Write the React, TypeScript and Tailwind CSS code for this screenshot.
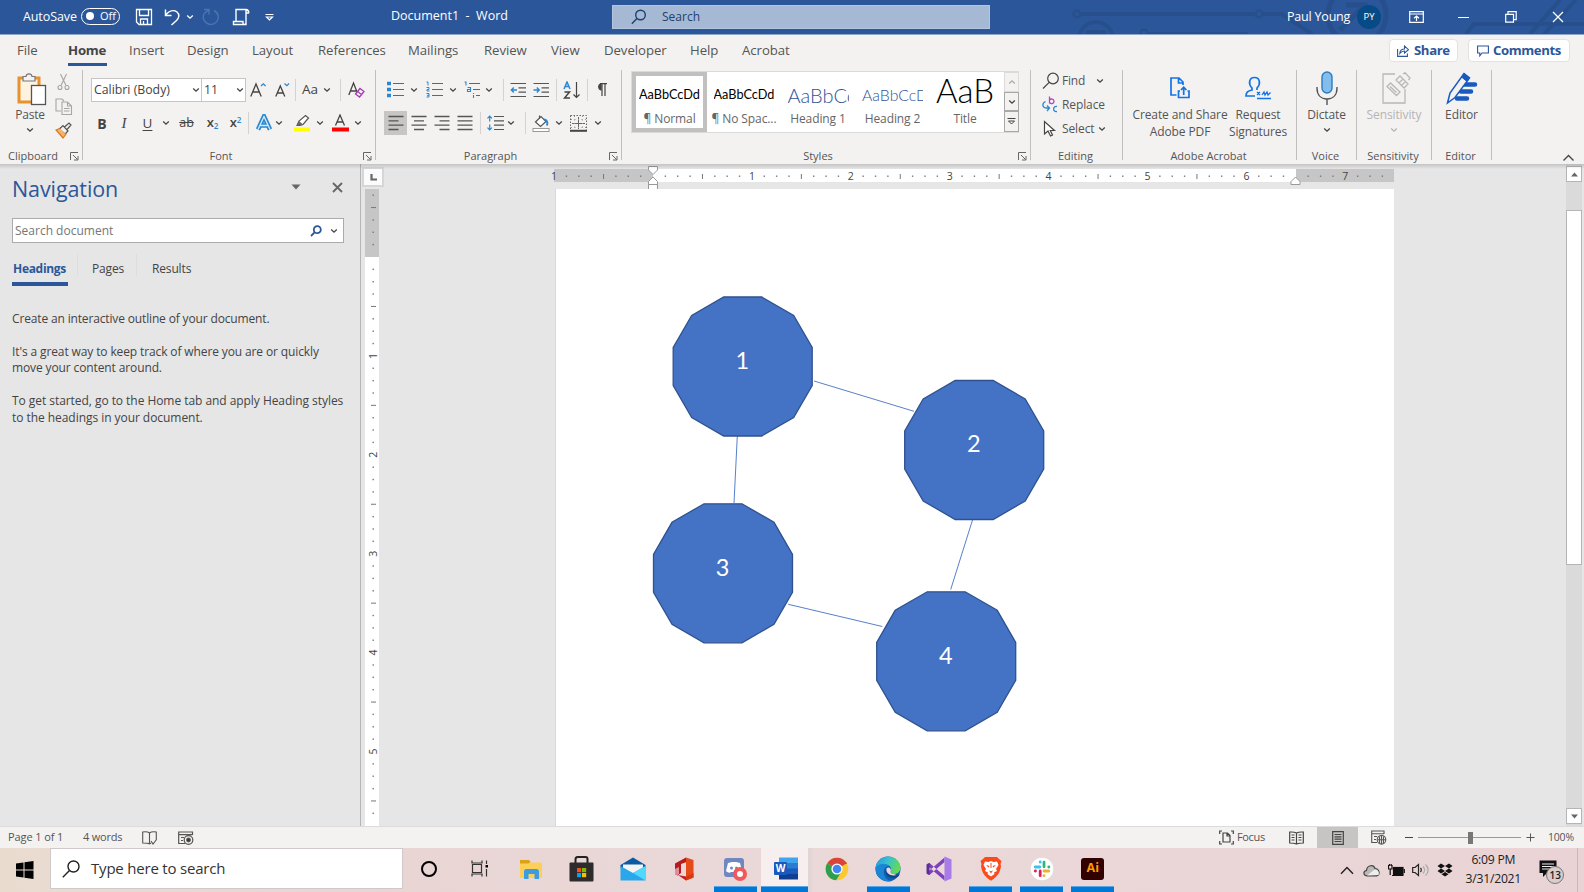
import React from "react";

type IcProps = { w: number; h: number; className?: string; s?: string; sw?: number; children: React.ReactNode };

function Ic({ w, h, className = "", s = "#444", sw = 1.2, children }: IcProps) {
  return (
    <svg width={w} height={h} viewBox={`0 0 ${w} ${h}`} fill="none" stroke={s} strokeWidth={sw} className={`block shrink-0 ${className}`}>
      {children}
    </svg>
  );
}

function Chev({ className = "", s = "#444" }: { className?: string; s?: string }) {
  return (
    <Ic w={8} h={8} s={s} sw={1.3} className={className}>
      <path d="M1.2 2.6 L4 5.2 L6.8 2.6" />
    </Ic>
  );
}

function Sep() {
  return <div className="mt-1 h-[90px] w-px shrink-0 bg-[#c0bfbe]" />;
}

function MiniSep({ className = "" }: { className?: string }) {
  return <div className={`h-[22px] w-px shrink-0 bg-[#d4d3d2] ${className}`} />;
}

function Group({ label, launcher, className, children }: { label: string; launcher?: boolean; className: string; children: React.ReactNode }) {
  return (
    <div className={`flex h-[98px] shrink-0 flex-col ${className}`}>
      <div className="h-[82px]">{children}</div>
      <div className="flex h-4 items-center pr-[3px]">
        <div className={`flex-1 whitespace-nowrap text-center text-[11px] text-[#555] ${launcher ? "pr-1" : "pl-px"}`}>{label}</div>
        {launcher && (
          <Ic w={9} h={9} s="#666" sw={1}>
            <path d="M0.5 8 V0.5 H8 M3 3 L7.5 7.5 M8 4 V8 H4" />
          </Ic>
        )}
      </div>
    </div>
  );
}

function TitleBar() {
  return (
    <header className="relative flex h-[35px] shrink-0 items-center border-b border-[#8fa6cb] bg-[#2b579a] text-[12.5px] text-white">
      <svg className="absolute left-[1060px] top-0" width="524" height="34" viewBox="0 0 524 34" fill="none" stroke="#274f8c" strokeWidth="4">
        <circle cx="17" cy="14" r="3.5" strokeWidth="2.5" />
        <path d="M21 14 H194 M203 14 H222 L252 34" />
        <circle cx="199" cy="14" r="3.5" strokeWidth="2.5" />
        <circle cx="36" cy="39" r="17" />
        <path d="M26 32 H46" />
        <circle cx="84" cy="33" r="3.5" strokeWidth="2.5" />
        <path d="M88 34 H188" />
        <circle cx="297" cy="15" r="29" strokeWidth="5" />
        <path d="M280 30 L304 6 M286 5 H305 V24" strokeWidth="5" />
        <path d="M406 34 L414 24 H524 M470 34 L500 0 M484 34 L516 0" />
      </svg>
      <div className="ml-[23px] w-[58px] whitespace-nowrap text-[12.5px] tracking-[-0.1px]">AutoSave</div>
      <div className="-mt-0.5 flex h-[17px] w-[39px] items-center rounded-full border border-white pl-1 text-[11px]">
        <div className="mr-[6px] h-2 w-2 rounded-full bg-white" />
        Off
      </div>
      <Ic w={18} h={18} s="#fff" sw={1.3} className="ml-[15px]">
        <path d="M1.5 1.5 H16.5 V16.5 H4 L1.5 14 Z M4.5 1.5 V7.5 H13.5 V1.5 M5.5 16 V11 H12.5 V16 M8.5 16 V13" />
      </Ic>
      <Ic w={17} h={18} s="#fff" sw={1.5} className="ml-[11px]">
        <path d="M1.5 1.5 V7.5 H7.5 M1.8 7 C5 3 9.5 1.5 13 4 C16 6.5 15 10 12.5 12.5 L7.5 17" />
      </Ic>
      <Chev s="#fff" className="ml-[5px]" />
      <Ic w={18} h={18} s="#4a74b0" sw={1.4} className="ml-[8px]">
        <path d="M2 1.5 H7 V6.5 M7 2 C2 4 0 8 2 12 C4 16.5 10 18 14 14.5 C18 10.5 16.500 4.500 12 2.500" />
      </Ic>
      <Ic w={18} h={18} s="#fff" sw={1.4} className="ml-[12px]">
        <path d="M4 13 V1.500 H14 V16.500 H1.500 V13.500 H11 V15 C11 17 14 17 14 15 M14 1.500 C17 1.500 17 5 16.500 5 H14" />
      </Ic>
      <Ic w={9} h={9} s="#fff" sw={1.2} className="ml-[15px]">
        <path d="M0.5 1.500 H8.500 M1.500 4 H7.500 L4.500 7 Z" />
      </Ic>
      <div className="-mt-0.5 ml-[117px] w-[221px] whitespace-pre text-[12.5px]">Document1  -  Word</div>
      <div className="flex h-6 w-[378px] items-center border border-[#b4c5df] bg-[#a6b9d4] text-[#1f3f70]">
        <Ic w={16} h={16} s="#1f3f70" sw={1.4} className="ml-[18px]">
          <circle cx="9.500" cy="6" r="4.800" />
          <path d="M6 9.500 L0.800 14.800" />
        </Ic>
        <div className="ml-[15px] text-[12px]">Search</div>
      </div>
      <div className="relative ml-[297px] w-[70px] whitespace-nowrap text-[12.5px] tracking-[-0.2px]">Paul Young</div>
      <div className="relative flex h-6 w-6 items-center justify-center rounded-full bg-[#064b86] text-[9.5px]">PY</div>
      <Ic w={15} h={12} s="#fff" sw={1.200} className="relative ml-[28px]">
        <path d="M0.700 0.700 H14.300 V11.300 H0.700 Z M0.700 3 H14.300 M7.500 10 V5.200 M5 7.300 L7.500 5 L10 7.300" />
      </Ic>
      <div className="relative ml-[34px] h-px w-[11px] bg-white" />
      <Ic w={12} h={12} s="#fff" sw={1.200} className="relative ml-[36px]">
        <path d="M0.700 3.300 H8.500 V11.200 H0.700 Z M3 3 V0.700 H11.200 V8.700 H8.500" />
      </Ic>
      <Ic w={12} h={12} s="#fff" sw={1.300} className="relative ml-[35px]">
        <path d="M1 1 L11 11 M11 1 L1 11" />
      </Ic>
    </header>
  );
}

function TabBar() {
  return (
    <nav className="flex h-[31px] shrink-0 items-center whitespace-nowrap pl-[17px] text-[13.2px] tracking-[-0.05px] text-[#555]">
      <div className="w-[51px]">File</div>
      <div className="w-[61px]">
        <div className="mt-1 flex h-[27px] w-[39px] items-center border-b-[3px] border-[#2b579a] pb-px font-bold tracking-[-0.200px] text-[#444]">Home</div>
      </div>
      <div className="w-[58px]">Insert</div>
      <div className="w-[65px]">Design</div>
      <div className="w-[66px]">Layout</div>
      <div className="w-[90px]">References</div>
      <div className="w-[76px]">Mailings</div>
      <div className="w-[67px]">Review</div>
      <div className="w-[53px]">View</div>
      <div className="w-[86px]">Developer</div>
      <div className="w-[52px]">Help</div>
      <div className="w-[647px]">Acrobat</div>
      <div className="flex h-[23px] w-[69px] items-center rounded-sm border border-[#e3e2e1] bg-white pl-[7px] font-bold text-[#2b579a]">
        <Ic w={12} h={12} s="#2b579a" sw={1.100} className="mr-[5px]">
          <path d="M0.600 4 V11.400 H10.400 V8.500 M2.800 8.500 C3 5.500 5 4 7.500 4 V1 L11.500 4.700 L7.500 8 V6 C5 6 4 7 2.800 8.500 Z" />
        </Ic>
        <span className="tracking-[-0.400px]">Share</span>
      </div>
      <div className="ml-[10px] flex h-[23px] w-[102px] items-center rounded-sm border border-[#e3e2e1] bg-white pl-[8px] font-bold text-[#2b579a]">
        <Ic w={12} h={12} s="#2b579a" sw={1.100} className="mr-[4px]">
          <path d="M0.600 1 H11.400 V8 H5 L2.800 10.800 V8 H0.600 Z" />
        </Ic>
        <span className="tracking-[-0.400px]">Comments</span>
      </div>
    </nav>
  );
}

function Clipboard() {
  return (
    <Group label="Clipboard" launcher className="w-[82px]">
      <div className="flex">
        <div className="flex w-[50px] flex-col items-center pl-[10px] pt-[7px]">
          <Ic w={30} h={33} className="ml-1">
            <rect x="2" y="5" width="20" height="24" stroke="#e8912d" strokeWidth="3" fill="#fdf3e0" />
            <path d="M6 3.500 H9 C9.500 0 14.500 0 15 3.500 H18 V8 H6 Z" fill="#f3f2f1" stroke="#777" />
            <rect x="14.500" y="12.500" width="14" height="19" fill="#fff" stroke="#555" strokeWidth="1.300" />
          </Ic>
          <div className="mt-px text-[12px] leading-4 tracking-[-0.200px] text-[#555]">Paste</div>
          <Chev className="mt-[3px]" />
        </div>
        <div className="flex flex-col pl-[5px] pt-[7px]">
          <Ic w={17} h={18} s="#a6a6a6" sw={1.100}>
            <path d="M5.500 1 L11 12.500 M11.500 1 L6 12.500" />
            <circle cx="5" cy="14.500" r="2" />
            <circle cx="12" cy="14.500" r="2" />
          </Ic>
          <Ic w={18} h={18} s="#a6a6a6" sw={1.100} className="mt-[7px]">
            <path d="M6 13 H1 V1 H7 L9 3 M7 4 H12.500 L16.500 8 V16.500 H7 Z M12.500 4 V8 H16.500 M9 10.500 H14.500 M9 13 H14.500" />
          </Ic>
          <Ic w={17} h={17} s="#555" sw={1.200} className="mt-[6px]">
            <path d="M1 8 L6 6 L11 12 L8 16 Z" fill="#f6b26b" stroke="#d97a1c" />
            <path d="M5 6.500 L8 3.500 L13 9 L10.500 11.500 M9.500 5 L14 1 L16 3 L12 7.500" fill="#f3f2f1" />
          </Ic>
        </div>
      </div>
    </Group>
  );
}

function FontGroup() {
  return (
    <Group label="Font" launcher className="w-[292px]">
      <div className="mt-3 flex h-[23px] items-center text-[#444]">
        <div className="ml-[8px] flex h-[24px] w-[111px] items-center justify-between border border-[#c6c6c6] bg-white pl-[2px] pr-px pt-px text-[12.3px]">
          Calibri (Body)
          <Chev />
        </div>
        <div className="-ml-px flex h-[24px] w-[45px] items-center justify-between border border-[#c6c6c6] bg-white pl-[2px] pr-px pt-px text-[12.3px]">
          11
          <Chev />
        </div>
        <Ic w={17} h={16} sw={1.300} className="ml-[4px]">
          <path d="M0.800 14.500 L6 2 L11.200 14.500 M2.600 10 H9.400" />
          <path d="M11 4 L13.300 1.800 L15.600 4" stroke="#2b88d0" />
        </Ic>
        <Ic w={15} h={16} sw={1.300} className="ml-[8px]">
          <path d="M0.800 14.500 L5.300 4 L9.800 14.500 M2.300 11 H8.300" />
          <path d="M9.500 1.500 L11.800 3.700 L14.100 1.500" stroke="#2b88d0" />
        </Ic>
        <MiniSep className="ml-[5px]" />
        <div className="ml-[6px] w-[21px] text-[13.500px]">Aa</div>
        <Chev />
        <MiniSep className="ml-[9px]" />
        <Ic w={18} h={18} sw={1.300} className="ml-[7px]">
          <path d="M0.800 14 L5.500 2 L9 11 M2.500 10 H8" />
          <path d="M7.500 13 L12 7.500 L16 10.500 L11.500 16 Z M9.500 10.500 L13.500 13.500" stroke="#a33bb0" />
        </Ic>
      </div>
      <div className="mt-[10px] flex h-6 items-center text-[#444]">
        <div className="ml-[9px] w-5 text-center text-[14px] font-bold">B</div>
        <div className="w-6 text-center font-['Liberation_Serif'] text-[15px] italic">I</div>
        <div className="w-[23px] text-center text-[13.500px] underline underline-offset-2">U</div>
        <div className="flex w-[14px] justify-center"><Chev /></div>
        <div className="w-[27px] text-center text-[12.500px] line-through">ab</div>
        <div className="w-[25px] text-center text-[13px] font-semibold">x<sub className="text-[8px] text-[#2b88d0]">2</sub></div>
        <div className="w-[21px] text-center text-[13px] font-semibold">x<sup className="text-[8px] text-[#2b88d0]">2</sup></div>
        <MiniSep className="ml-[2px]" />
        <Ic w={18} h={18} className="ml-[6px]">
          <path d="M3 15.500 L9 2.500 L15 15.500 M5.500 11.500 H12.500" stroke="#2b88d0" strokeWidth="4.600" />
          <path d="M3 15.500 L9 2.500 L15 15.500 M5.500 11.500 H12.500" stroke="#d6eaf9" strokeWidth="1.300" />
        </Ic>
        <Chev className="ml-[2px]" />
        <Ic w={18} h={18} className="ml-[10px]">
          <path d="M4 11.500 L6 7 L12.500 1.500 L15.500 4 L10 10.500 L7 11.500 Z" fill="#fff" stroke="#555" />
          <path d="M4 11.500 L6 7 L10 10.500 L7 11.500 Z" fill="#666" stroke="none" />
          <rect x="1" y="13.500" width="16" height="4" fill="#ff0" stroke="none" />
        </Ic>
        <Chev className="ml-[5px]" />
        <Ic w={18} h={18} sw={1.300} className="ml-[7px]">
          <path d="M4.500 11.500 L9 1 L13.500 11.500 M6 8 H12" />
          <rect x="1" y="13.500" width="17" height="4" fill="#f00" stroke="none" />
        </Ic>
        <Chev className="ml-[5px]" />
      </div>
    </Group>
  );
}

function Lines({ d, className = "" }: { d: string; className?: string }) {
  return (
    <Ic w={16} h={16} s="#555" sw={1.300} className={className}>
      <path d={d} />
    </Ic>
  );
}

function ParagraphGroup() {
  return (
    <Group label="Paragraph" launcher className="w-[245px]">
      <div className="mt-3 flex h-[23px] items-center">
        <Ic w={17} h={17} s="#666" className="ml-[11px]">
          <path d="M6 2.500 H17 M6 8.500 H17 M6 14.500 H17" />
          <path d="M0 2.500 H4 M0 8.500 H4 M0 14.500 H4" stroke="#2b88d0" strokeWidth="3.500" />
        </Ic>
        <Chev className="ml-[6px]" />
        <Ic w={17} h={17} s="#666" className="ml-[8px]">
          <path d="M6 2.500 H17 M6 8.500 H17 M6 14.500 H17" />
          <path d="M0.500 1 H2 V4.500 M0.500 6.500 H3 V8.500 H1 V10 H3.500 M0.500 12.500 H3 V16 H0.500 M1 14.300 H3" stroke="#2b88d0" strokeWidth="1" />
        </Ic>
        <Chev className="ml-[6px]" />
        <Ic w={17} h={17} s="#666" className="ml-[7px]">
          <path d="M5 2.500 H16 M9 8.500 H16 M12 14.500 H16" />
          <path d="M0.500 1 H2 V4.500 M3.500 6.500 H6.500 V10.500 H3.500 V8.500 H6.500 M9.500 12 V13 M9.500 14 V17" stroke="#2b88d0" strokeWidth="1.100" />
        </Ic>
        <Chev className="ml-[4px]" />
        <MiniSep className="ml-[10px]" />
        <Ic w={17} h={16} s="#555" className="ml-[6px]">
          <path d="M0.500 1.500 H16 M8.500 5.800 H16 M8.500 10.200 H16 M0.500 14.500 H16" />
          <path d="M7 8 H1.500 M3.800 5.500 L1.300 8 L3.800 10.500" stroke="#2b88d0" strokeWidth="1.400" />
        </Ic>
        <Ic w={17} h={16} s="#555" className="ml-[6px]">
          <path d="M0.500 1.500 H16 M8.500 5.800 H16 M8.500 10.200 H16 M0.500 14.500 H16" />
          <path d="M0.500 8 H6 M3.800 5.500 L6.300 8 L3.800 10.500" stroke="#2b88d0" strokeWidth="1.400" />
        </Ic>
        <MiniSep className="ml-[6px]" />
        <Ic w={18} h={18} s="#444" className="ml-[6px]">
          <path d="M1 8 L4 1 L7 8 M2.200 5.500 H5.800" stroke="#2b88d0" strokeWidth="1.500" />
          <path d="M1.500 11 H6.500 L1.500 17 H7" strokeWidth="1.500" />
          <path d="M13.500 1 V16.500 M10.500 13.500 L13.500 16.500 L16.500 13.500" />
        </Ic>
        <MiniSep className="ml-[6px]" />
        <Ic w={12} h={14} s="#444" className="ml-[8px]">
          <path d="M5 0.700 A3.300 3.300 0 0 0 5 7 Z" fill="#444" />
          <path d="M4 0.700 H11 M6 1 V13 M9 1 V13" />
        </Ic>
      </div>
      <div className="mt-[10px] flex h-6 items-center">
        <div className="ml-2 flex h-6 w-[23px] items-center justify-center bg-[#c8c6c4]">
          <Lines d="M0.500 1.500 H15.500 M0.500 5.800 H10.500 M0.500 10.200 H15.500 M0.500 14.500 H10.500" />
        </div>
        <Lines className="ml-[4px]" d="M0.500 1.500 H15.500 M3 5.800 H13 M0.500 10.200 H15.500 M3 14.500 H13" />
        <Lines className="ml-[7px]" d="M0.500 1.500 H15.500 M5.500 5.800 H15.500 M0.500 10.200 H15.500 M5.500 14.500 H15.500" />
        <Lines className="ml-[7px]" d="M0.500 1.500 H15.500 M0.500 5.800 H15.500 M0.500 10.200 H15.500 M0.500 14.500 H15.500" />
        <MiniSep className="ml-[7px]" />
        <Ic w={18} h={16} s="#555" className="ml-[6px]">
          <path d="M7 1.500 H17 M7 5.800 H17 M7 10.200 H17 M7 14.500 H17" />
          <path d="M2.700 1 V6.500 M2.700 9.500 V15 M0.500 3.300 L2.700 1 L4.900 3.300 M0.500 12.700 L2.700 15 L4.900 12.700" stroke="#2b88d0" />
        </Ic>
        <Chev className="ml-[2px]" />
        <MiniSep className="ml-[10px]" />
        <Ic w={18} h={17} s="#555" className="ml-[6px]">
          <path d="M3.500 7 L9 1.500 L14 6.500 L8.500 11.500 Z M7.500 4 V0.500" fill="#fff" />
          <path d="M12 4.500 C15 5 16 7 15 10.500" stroke="#2b88d0" strokeWidth="2" />
          <rect x="1" y="13.500" width="16" height="3" fill="#fff" stroke="#999" strokeWidth="1" />
        </Ic>
        <Chev className="ml-[5px]" />
        <Ic w={17} h={17} s="#666" sw={1} className="ml-[7px]">
          <path d="M0.500 0.500 H16.500 V15 M0.500 0.500 V15" strokeDasharray="1.500 1.500" />
          <path d="M8.500 2 V14 M2 8.500 H15" />
          <path d="M4.500 1 V14 M12.500 1 V14 M1 4.500 H16 M1 12.500 H16" strokeDasharray="1 2.500" stroke="#999" />
          <path d="M0 15.800 H17" strokeWidth="2" stroke="#444" />
        </Ic>
        <Chev className="ml-[7px]" />
      </div>
    </Group>
  );
}

function StyleCell({ sample, name, sampleClass, className }: { sample: string; name: string; sampleClass: string; className: string }) {
  return (
    <div className={`flex flex-col items-center overflow-hidden ${className}`}>
      <div className={`flex shrink-0 items-center overflow-hidden whitespace-nowrap font-['Lato'] ${sampleClass}`}>{sample}</div>
      <div className="h-4 whitespace-nowrap text-[12px] leading-4 tracking-[-0.100px] text-[#666]">{name}</div>
    </div>
  );
}

function StylesGroup() {
  return (
    <Group label="Styles" launcher className="w-[408px]">
      <div className="ml-[9px] mt-[5px] flex h-[62px] w-[388px] border border-[#dcdbda] bg-white">
        <StyleCell sample="AaBbCcDd" name="¶ Normal" sampleClass="h-[35px] pt-[3px] text-[12.700px] text-black" className="h-[60px] w-[75px] border-4 border-[#c1c0bf]" />
        <StyleCell sample="AaBbCcDd" name="¶ No Spac..." sampleClass="h-[35px] pt-[3px] text-[12.700px] text-black" className="w-[74px] pt-1" />
        <StyleCell sample="AaBbCcDd" name="Heading 1" sampleClass="h-[35px] pt-[2px] w-[61px] text-[20px] font-light text-[#2f5496]" className="w-[74px] pt-1" />
        <StyleCell sample="AaBbCcDd" name="Heading 2" sampleClass="h-[35px] pt-[2px] w-[61px] text-[15.800px] font-light text-[#2f5496]" className="w-[75px] pt-1" />
        <StyleCell sample="AaB" name="Title" sampleClass="mt-[3px] h-[32px] pb-[9px] text-[33px] leading-none font-light text-black" className="w-[70px] pt-1" />
        <div className="-mr-px ml-1 flex flex-1 flex-col bg-[#f3f2f1]">
          <div className="flex h-5 items-center justify-center border border-[#dcdbda]"><Chev s="#aaa" className="rotate-180" /></div>
          <div className="flex h-5 items-center justify-center border border-[#a9a8a7]"><Chev /></div>
          <div className="flex h-[21px] items-center justify-center border border-[#a9a8a7]">
            <Ic w={9} h={9} s="#444" sw={1}><path d="M0.500 1.500 H8.500 M1.500 4 H7.500 L4.500 7 Z" /></Ic>
          </div>
        </div>
      </div>
    </Group>
  );
}

function EditingGroup() {
  return (
    <Group label="Editing" className="w-[91px]">
      <div className="flex flex-col pl-[11px] pt-[3px] text-[12px] text-[#555]">
        <div className="flex h-6 items-center">
          <Ic w={18} h={18} s="#444" className="-mt-px mr-[2px]">
            <circle cx="11" cy="6.500" r="5.300" />
            <path d="M7.200 10.300 L1 16.500" />
          </Ic>
          <div className="w-[34px] tracking-[-0.200px]">Find</div>
          <Chev />
        </div>
        <div className="flex h-6 items-center">
          <div className="flex w-5 items-center">
            <Ic w={17} h={18} s="#2b88d0" sw={1.300}>
              <path d="M3.500 5.500 C0 7 0 11 3.500 12 H7 M5 9.500 L7.500 12 L5 15" />
              <path d="M15 10.500 C10.500 9.500 10.500 16.500 15 15.500" />
              <path d="M7.500 0.500 V7.500 M7.500 4 C9 2.200 12 3 12 5.300 C12 7.800 9 8.500 7.500 6.500" stroke="#b146c2" />
            </Ic>
          </div>
          <div className="tracking-[-0.100px]">Replace</div>
        </div>
        <div className="flex h-6 items-center">
          <Ic w={17} h={18} s="#444" className="mr-[3px]">
            <path d="M2.500 1.500 V14 L6 11 L8.500 16 L10.500 15 L8.300 10.500 H12.500 Z" fill="#fff" />
          </Ic>
          <div className="w-[36px] tracking-[-0.100px]">Select</div>
          <Chev />
        </div>
      </div>
    </Group>
  );
}

function BigButton({ icon, lines, className, chevron, muted }: { icon: React.ReactNode; lines: string[]; className: string; chevron?: boolean; muted?: boolean }) {
  return (
    <div className={`flex flex-col items-center ${className}`}>
      <div className="flex h-[41px] items-center justify-center pt-[3px]">{icon}</div>
      {lines.map((l) => (
        <div key={l} className={`whitespace-nowrap text-[12px] leading-[16.500px] tracking-[-0.100px] ${muted ? "text-[#b5b4b3]" : "text-[#555]"}`}>{l}</div>
      ))}
      {chevron && <Chev className="mt-[2px]" s={muted ? "#b5b4b3" : "#444"} />}
    </div>
  );
}

function RightGroups() {
  return (
    <>
      <Group label="Adobe Acrobat" className="w-[173px]">
        <div className="flex">
          <BigButton
            className="w-[114px]"
            lines={["Create and Share", "Adobe PDF"]}
            icon={
              <Ic w={20} h={22} s="#1473e6" sw={1.700}>
                <path d="M6.500 18 H1 V1 H9 L13 5 V8 M8.500 1 V6 H13 M10 14 H8.500 V20.500 H19 V14 H17.500 M13.700 18 V10.500 M11 13 L13.700 10.300 L16.400 13" />
              </Ic>
            }
          />
          <BigButton
            className="w-[42px]"
            lines={["Request", "Signatures"]}
            icon={
              <Ic w={26} h={24} s="#1473e6" sw={1.700}>
                <path d="M10 20 H1 C1 16 3 15 7 14 V12 C3 8 4 1.500 9.500 1.500 C15 1.500 16 8 12 12 V14 M12 22.500 H26" />
                <path d="M12 16 L15 19 M15 16 L12 19 M17 19 L19 16 L20 19 L22 16 L23 19 L25.500 16.500" strokeWidth="1.300" />
              </Ic>
            }
          />
        </div>
      </Group>
      <Sep />
      <Group label="Voice" className="w-[59px]">
        <BigButton
          className="w-[59px]"
          chevron
          lines={["Dictate"]}
          icon={
            <Ic w={22} h={34} s="#555" sw={1.400}>
              <path d="M1 16 V17 C1 24 5 28 11 28 C17 28 21 24 21 17 V16 M11 28 V34" />
              <rect x="6" y="1" width="10" height="21" rx="5" fill="#83bdeb" stroke="#2b7cc4" />
            </Ic>
          }
        />
      </Group>
      <Sep />
      <Group label="Sensitivity" className="w-[74px]">
        <BigButton
          className="w-[74px]"
          chevron
          muted
          lines={["Sensitivity"]}
          icon={
            <Ic w={30} h={32} s="#b8b7b6" sw={1.300} className="ml-[3px]">
              <path d="M14 2 H2 V31 H24 V17" />
              <path d="M6 14.500 L9.500 11 L19 20 L15.500 23.500 Z M9 14.500 L15.500 20.500 M15 8 L19 4 L27 12 L23 16 Z M18 11 L22 7 M20.500 13.500 L24.500 9.500 M22 2 L24 0.700 L29 6 L27.500 8" />
            </Ic>
          }
        />
      </Group>
      <Sep />
      <Group label="Editor" className="w-[59px]">
        <BigButton
          className="w-[59px]"
          lines={["Editor"]}
          icon={
            <Ic w={32} h={34} s="#185abd" sw={4.500}>
              <path d="M18 13.500 H29 M15 20.500 H25 M11 27.500 H21" strokeLinecap="round" />
              <path d="M1.500 32 L4 22 L18 2.500 L23.500 7 L9 26.500 Z" fill="#f3f2f1" strokeWidth="1.500" />
              <path d="M18 2.500 L23.500 7 L21 10.500 L15.500 6 Z" fill="#185abd" strokeWidth="1" />
            </Ic>
          }
        />
      </Group>
      <Sep />
      <div className="flex flex-1 items-end justify-end pb-[2px] pr-[9px]">
        <Ic w={13} h={9} s="#444" sw={1.400}><path d="M1.500 7.500 L6.500 2.500 L11.500 7.500" /></Ic>
      </div>
    </>
  );
}

function NavigationPane() {
  return (
    <aside className="flex w-[361px] shrink-0 flex-col border-r border-[#b5b5b5] pl-[12px] text-[#444]">
      <div className="mt-[8px] flex h-[34px] items-center">
        <div className="w-[279px] text-[21.500px] tracking-[-0.100px] text-[#2b579a]">Navigation</div>
        <Ic w={10} h={6} className="-mt-1"><path d="M0.500 0.500 H9.500 L5 5.500 Z" fill="#666" stroke="none" /></Ic>
        <Ic w={11} h={11} s="#666" sw={1.800} className="-mt-1 ml-[31px]"><path d="M1 1 L10 10 M10 1 L1 10" /></Ic>
      </div>
      <div className="mt-[12px] flex h-[25px] w-[332px] items-center border border-[#ababab] bg-white">
        <div className="w-[297px] pl-[2px] pt-px text-[12px] text-[#767676]">Search document</div>
        <Ic w={12} h={12} s="#2b579a" sw={1.800}><circle cx="7.300" cy="4.700" r="3.500" /><path d="M4.800 7.200 L1 11" /></Ic>
        <Chev className="ml-[8px]" />
      </div>
      <div className="mt-[11px] flex h-[32px] text-[12px]">
        <div className="flex w-[56px] items-center border-b-[4px] border-[#2b579a] pl-px pt-[2px] font-bold tracking-[-0.300px] text-[#2b579a]">Headings</div>
        <div className="ml-[9px] h-[22px] w-px bg-[#dedede]" />
        <div className="flex h-[28px] w-[58px] items-center pl-[14px] pt-[2px] tracking-[-0.150px]">Pages</div>
        <div className="h-[22px] w-px bg-[#dedede]" />
        <div className="flex h-[28px] items-center pl-[15px] pt-[2px] tracking-[-0.150px]">Results</div>
      </div>
      <div className="mt-[25px] whitespace-nowrap text-[12px] leading-[16.500px]">
        <p className="tracking-[-0.150px]">Create an interactive outline of your document.</p>
        <p className="mt-[16px] tracking-[-0.120px]">It's a great way to keep track of where you are or quickly<br />move your content around.</p>
        <p className="mt-[16.500px] tracking-[-0.050px]">To get started, go to the Home tab and apply Heading styles<br />to the headings in your document.</p>
      </div>
    </aside>
  );
}

const INCH = 98.9;

function HorizontalRuler() {
  const marks: React.ReactNode[] = [];
  for (let i = -7; i <= 59; i++) {
    const x = 99 + (i * INCH) / 8;
    if (i === 0 || i === 52) continue;
    if (i % 8 === 0) marks.push(<text key={i} x={x} y="11" textAnchor="middle" fontSize="10.500" fill="#444">{Math.abs(i / 8)}</text>);
    else if (i % 4 === 0) marks.push(<rect key={i} x={x - 0.500} y="5" width="1" height="5" fill="#777" />);
    else marks.push(<rect key={i} x={x - 0.700} y="6.500" width="1.400" height="1.400" fill="#777" />);
  }
  return (
    <svg width="840" height="22" viewBox="0 0 840 22" className="block overflow-visible font-['Open_Sans']">
      <rect y="0" width="840" height="13" fill="#fff" />
      <rect y="0" width="99" height="13" fill="#c6c6c6" />
      <rect x="742" y="0" width="98" height="13" fill="#c6c6c6" />
      <text x="0" y="11" textAnchor="middle" fontSize="10.500" fill="#444">1</text>
      {marks}
      <g fill="#fff" stroke="#999">
        <path d="M94.500 -2.500 H103.500 V1 L99 5.500 L94.500 1 Z" />
        <path d="M99 8 L103.500 12.500 V20.500 H94.500 V12.500 Z M94.500 15.500 H103.500" />
        <path d="M741.500 8 L746 12.500 V15.500 H737 V12.500 Z" />
      </g>
    </svg>
  );
}

function VerticalRuler() {
  const marks: React.ReactNode[] = [];
  for (let i = -5; i <= 45; i++) {
    const y = 68 + (i * INCH) / 8;
    if (i === 0) continue;
    if (i % 8 === 0) marks.push(<text key={i} x="0" y="0" transform={`translate(11.500 ${y}) rotate(-90)`} textAnchor="middle" fontSize="10.500" fill="#444">{i / 8}</text>);
    else if (i % 4 === 0) marks.push(<rect key={i} x="6" y={y - 0.500} width="5" height="1" fill="#777" />);
    else marks.push(<rect key={i} x="7.500" y={y - 0.700} width="1.400" height="1.400" fill="#777" />);
  }
  return (
    <svg width="14" height="637" viewBox="0 0 14 637" className="block font-['Open_Sans']">
      <rect width="14" height="637" fill="#fff" />
      <rect width="14" height="68" fill="#c6c6c6" />
      {marks}
    </svg>
  );
}

const nodes = [
  { n: "1", x: 187.700, y: 177.500 },
  { n: "2", x: 419.200, y: 261 },
  { n: "3", x: 168, y: 384.300 },
  { n: "4", x: 391.200, y: 472.300 },
];

const dodecagon = [
  [-19, -69.500], [19, -69.500], [51, -51], [69.500, -19], [69.500, 19], [51, 51],
  [19, 69.500], [-19, 69.500], [-51, 51], [-69.500, 19], [-69.500, -19], [-51, -51],
];

function Diagram() {
  return (
    <svg width="838" height="637" viewBox="1 0 838 637" className="block">
      <g stroke="#4472c4" strokeWidth="0.900">
        <path d="M259 192 L359 222.300 M182.300 247 L179 314 M417.500 331 L395.700 400.500 M233.300 415.300 L327.300 437.500" />
      </g>
      {nodes.map(({ n, x, y }) => (
        <g key={n}>
          <polygon points={dodecagon.map(([dx, dy]) => `${x + dx},${y + dy}`).join(" ")} fill="#4472c4" stroke="#2f528f" strokeWidth="1.300" />
          <text x={x - 0.500} y={y + 2.300} textAnchor="middle" fontSize="23.500" fill="#fff" className="font-['Lato']">{n}</text>
        </g>
      ))}
    </svg>
  );
}

function Editor() {
  return (
    <main className="flex h-[662px] shrink-0 bg-[#e6e6e6]">
      <NavigationPane />
      <div className="flex w-6 shrink-0 flex-col pl-px pt-[3px]">
        <div className="flex h-[20px] w-[22px] items-center justify-center border-2 border-[#d6d6d6] bg-[#fbfbfb]">
          <Ic w={7} h={7} s="#666" sw={2.200}><path d="M1.500 0 V5.500 H7" /></Ic>
        </div>
        <div className="ml-[3px] mt-[2px]"><VerticalRuler /></div>
      </div>
      <div className="ml-[169px] flex w-[840px] shrink-0 flex-col pt-[5px]">
        <HorizontalRuler />
        <div className="-mt-[2px] ml-px h-[637px] w-[839px] border-l border-[#d9d9d9] bg-white"><Diagram /></div>
      </div>
      <div className="ml-[172px] flex w-4 shrink-0 flex-col bg-[#dadada] pb-[2px] pt-[2px]">
        <div className="flex h-4 items-center justify-center border border-[#b5b5b5] bg-white"><Ic w={7} h={5}><path d="M0 4.500 L3.500 0.500 L7 4.500 Z" fill="#666" stroke="none" /></Ic></div>
        <div className="mt-[28px] h-[355px] border border-[#b5b5b5] bg-white" />
        <div className="flex-1" />
        <div className="flex h-4 items-center justify-center border border-[#b5b5b5] bg-white"><Ic w={7} h={5}><path d="M0 0.500 L3.500 4.500 L7 0.500 Z" fill="#666" stroke="none" /></Ic></div>
      </div>
    </main>
  );
}

function StatusBar() {
  return (
    <div className="flex h-[22px] shrink-0 items-center border-t border-[#dcdcdc] bg-[#f3f2f1] text-[11px] text-[#555]">
      <div className="ml-2 w-[75px] whitespace-nowrap tracking-[-0.100px]">Page 1 of 1</div>
      <div className="w-[59px] whitespace-nowrap tracking-[-0.200px]">4 words</div>
      <Ic w={15} h={14} s="#555" sw={1.100}><path d="M7.500 2 V13 M7.500 2 C6 0.700 3 0.700 0.700 1 V12 C3 12 6 12 7.500 13 M7.500 2 C9 0.700 12 0.700 14.300 1 V9 M7.500 13 L9 12 M9 10 L11 13 L14.500 8.500" /></Ic>
      <Ic w={16} h={14} s="#555" sw={1.200} className="ml-[21px]">
        <path d="M7 12.500 H0.700 V1 H14.500 V4 M0.700 3.700 H14.500 M3 6.500 H6 M3 9.500 H5" />
        <circle cx="10.500" cy="9" r="4.300" /><circle cx="10.500" cy="9" r="1.800" fill="#333" />
      </Ic>
      <Ic w={15} h={15} s="#444" sw={1.200} className="ml-[1025px]">
        <path d="M3 1 H0.700 V4 M0.700 11 V14 H3 M12 1 H14.300 V4 M14.300 11 V14 H12 M4 3 H8.500 L11 5.500 V12 H4 Z M8 3 V6 H11" />
      </Ic>
      <div className="ml-[3px] w-[52px] tracking-[-0.350px]">Focus</div>
      <Ic w={15} h={14} s="#444" sw={1.200}><path d="M7.500 2 V13 M7.500 2 C5 0.700 3 1 0.700 1 V12 C3 12 5 12 7.500 13 C10 12 12 12 14.300 12 V1 C12 1 10 0.700 7.500 2 M2.500 4 H5.500 M2.500 6.500 H5.500 M2.500 9 H5.500 M9.500 4 H12.500 M9.500 6.500 H12.500 M9.500 9 H12.500" /></Ic>
      <div className="ml-[13px] flex h-[22px] w-[41px] items-center justify-center bg-[#c6c5c4]">
        <Ic w={12} h={14} s="#444" sw={1.200}><path d="M0.700 0.700 H11.300 V13.300 H0.700 Z M2.500 3.500 H9.500 M2.500 5.800 H9.500 M2.500 8.200 H9.500 M2.500 10.500 H9.500" /></Ic>
      </div>
      <Ic w={16} h={15} s="#555" sw={1.100} className="ml-[13px]">
        <path d="M6 12.500 H0.700 V1 H13 V4 M0.700 3.700 H13 M3 6.500 H6 M3 9.500 H5" />
        <circle cx="10.500" cy="9.800" r="4.300" /><path d="M6.500 9.800 H15 M10.500 5.500 V14 M8.500 6.500 V13 M12.500 6.500 V13" />
      </Ic>
      <div className="ml-[18px] h-px w-[8px] bg-[#444]" />
      <div className="ml-[5px] h-px w-[50px] bg-[#999]" />
      <div className="h-3 w-[5px] bg-[#777]" />
      <div className="h-px w-[48px] bg-[#999]" />
      <Ic w={9} h={9} s="#555" sw={1} className="ml-[5px]"><path d="M4.500 0.500 V8.500 M0.500 4.500 H8.500" /></Ic>
      <div className="ml-[13px] whitespace-nowrap text-[10.500px] tracking-[-0.200px]">100%</div>
    </div>
  );
}

function TaskItem({ open, active, children }: { open?: boolean; active?: boolean; children: React.ReactNode }) {
  return (
    <div className={`flex h-11 w-[51.1px] shrink-0 flex-col items-center ${active ? "border-r-4 border-[#e2d5d6] bg-[#f7efef]" : ""}`}>
      <div className={`flex h-[38px] items-center justify-center pt-[3px] ${active ? "pl-1" : ""}`}>{children}</div>
      {open && <div className={`h-[6px] border-t border-[#5ea6e2] bg-[#0078d7] ${active ? "w-full" : "w-[43px]"}`} />}
    </div>
  );
}

function Taskbar() {
  return (
    <footer className="flex h-11 shrink-0 bg-[linear-gradient(90deg,#e9dccf_0px,#e8d5d4_403px,#ebd8d9_900px,#e9d3d5_1584px)]">
      <div className="flex w-[50px] items-center pl-4">
        <Ic w={18} h={18}><path d="M0 2.500 L7.500 1.500 V8.500 H0 Z M8.500 1.300 L17.500 0 V8.500 H8.500 Z M0 9.500 H7.500 V16.500 L0 15.500 Z M8.500 9.500 H17.500 V18 L8.500 16.700 Z" fill="#000" stroke="none" /></Ic>
      </div>
      <div className="flex h-[41px] w-[353px] items-center border border-[#cfc9c9] bg-white">
        <Ic w={18} h={18} s="#222" sw={1.400} className="ml-[11px]"><circle cx="11.500" cy="6.500" r="5.500" /><path d="M7.500 10.500 L0.800 17.200" /></Ic>
        <div className="ml-[11px] text-[15px] tracking-[-0.200px] text-[#333]">Type here to search</div>
      </div>
      <TaskItem><Ic w={18} h={18} s="#000" sw={2}><circle cx="9" cy="9" r="7" /></Ic></TaskItem>
      <TaskItem>
        <Ic w={17} h={17} s="#333" sw={1.200}><path d="M1 0.500 V3 H11 V0.500 M1 16.500 V14 H11 V16.500 M1.500 4.500 H10.500 V12.500 H1.500 Z M15.500 0.500 V4 M15.500 9 V16.500" /><rect x="14.500" y="5" width="2.500" height="2.500" fill="#000" stroke="none" /></Ic>
      </TaskItem>
      <TaskItem>
        <Ic w={24} h={20} s="none"><path d="M1 1 H9 L11 3 V7 H1 Z" fill="#dda016" /><rect x="1" y="3.500" width="22" height="15.500" rx="1" fill="#fcd057" /><path d="M1 1 H10 L11.500 3 L9.500 4.500 H1 Z" fill="#dda016" /><path d="M5 20 V12.500 C5 11 6 10 7 10 H17.500 C19 10 20 11 20 12.500 V20 H15.500 V15 H9.500 V20 Z" fill="#3d9be0" /></Ic>
      </TaskItem>
      <TaskItem>
        <Ic w={25} h={26} s="none"><path d="M6.500 8 V3.500 C6.500 1.500 7.500 1 8.500 1 H16.500 C18 1 18.500 2 18.500 3 V8" stroke="#222" strokeWidth="2" /><rect x="0.500" y="6.500" width="24" height="19" rx="1" fill="#2d2b2b" /><path d="M8 12 H12.200 V16.200 H8 Z" fill="#f25022" /><path d="M13 12 H17.200 V16.200 H13 Z" fill="#7fba00" /><path d="M8 17 H12.200 V21.200 H8 Z" fill="#00a4ef" /><path d="M13 17 H17.200 V21.200 H13 Z" fill="#ffb900" /></Ic>
      </TaskItem>
      <TaskItem>
        <Ic w={26} h={24} s="none"><path d="M0.500 8 L13 0.500 L25.500 8 V11 H0.500 Z" fill="#0c59a4" /><path d="M3 7.500 H23 V14 L13 18 L3 14 Z" fill="#f4f4f4" /><path d="M0.500 9 L13 16 L25.500 9 V23.500 H0.500 Z" fill="#28a8ea" /><path d="M25.500 9 L13 16 L25.500 23.500 Z" fill="#50d9ff" /></Ic>
      </TaskItem>
      <TaskItem>
        <Ic w={20} h={24} s="none"><path d="M1 6.500 L12 0.500 L12.500 5 L7 7 V16 L3.500 18.500 L1 17 Z" fill="#b51a1e" /><path d="M12 0.500 L19.500 3 V20.500 L12 23.500 V5 Z" fill="#e64a19" /><path d="M4 18 L12 19.500 V23.500 Z" fill="#c21d26" /><path d="M12 19.500 V23.500 L19.500 20.500 V16 Z" fill="#d9390c" /><path d="M1 12 L5 10 V17 L3 18.300 L1 17 Z" fill="#e68a9c" /></Ic>
      </TaskItem>
      <TaskItem open>
        <Ic w={24} h={24} s="none"><rect x="1" y="1" width="20" height="19" rx="3" fill="#7187c2" /><path d="M5 6 C8 4.500 14 4.500 17 6 L19 14 C17 16 15 16 14 15 H8 C7 16 5 16 3 14 Z" fill="#fff" /><circle cx="8.500" cy="11" r="1.500" fill="#7187c2" /><circle cx="13.500" cy="11" r="1.500" fill="#7187c2" /><circle cx="17" cy="17" r="7" fill="#f05a5b" /><circle cx="17" cy="17" r="3" fill="#fff" /></Ic>
      </TaskItem>
      <TaskItem open active>
        <Ic w={24} h={23} s="none"><path d="M5 0.500 H24 V6.500 H5 Z" fill="#41a5ee" /><path d="M5 6 H24 V12 H5 Z" fill="#2b7cd3" /><path d="M5 11.500 H24 V17.500 H5 Z" fill="#185abd" /><path d="M5 17 H24 V22.500 H5 Z" fill="#103f91" /><rect x="0" y="5" width="13" height="13" rx="1" fill="#185abd" /><text x="6.500" y="15" textAnchor="middle" fontSize="10" fontWeight="700" fill="#fff">W</text></Ic>
      </TaskItem>
      <TaskItem>
        <Ic w={24} h={24} s="none"><circle cx="12" cy="12" r="11.300" fill="#fcc934" /><path d="M12 12 L2.200 6.300 A11.300 11.300 0 0 1 21.800 6.300 Z" fill="#d9453a" /><path d="M2.200 6.300 A11.300 11.300 0 0 0 11 23.300 L17 14 L12 12 Z" fill="#2f9e4f" /><path d="M12 6.300 H21.800" stroke="#d9453a" /><circle cx="12" cy="12" r="5.600" fill="#fff" /><circle cx="12" cy="12" r="4.300" fill="#4285f4" /></Ic>
      </TaskItem>
      <TaskItem open>
        <Ic w={26} h={26} s="none">
          <defs><linearGradient id="edgeTop" x1="0" y1="0" x2="1" y2="0.300"><stop offset="0" stopColor="#2196e0" /><stop offset="0.500" stopColor="#35c1d0" /><stop offset="1" stopColor="#62d957" /></linearGradient></defs>
          <circle cx="13" cy="13" r="12.500" fill="#125fae" />
          <path d="M0.700 12 C1 5 7 0.500 13 0.500 C20 0.500 25.500 6 25.500 11.500 C25.500 16 22 18 19 18 C16 18 15 16.500 15.800 15 C17 12 15 9 11 9 C6 9 1 10.500 0.700 14 Z" fill="url(#edgeTop)" />
          <path d="M1 11 C6 6 13 8 14 10 C10 10 8 14 9 18 C10 22 13 25 17 25 C8 27 0 21 0.700 12 Z" fill="#1b86d4" />
          <path d="M11 12.500 C10 17 15 21 23.500 18.500 C24 18.300 25 18 24 19.500 C21 23 17 22.500 14 21 C10.500 19 9.500 15 11 12.500 Z" fill="#0c4a87" />
          <path d="M11.500 12.500 C13 10.500 16.500 12 15.800 15 C15 16.500 16 18 19 18 L21.500 19 C16 20.500 10.500 17.500 11.500 12.500 Z" fill="#ebd8d9" />
        </Ic>
      </TaskItem>
      <TaskItem>
        <Ic w={26} h={26} s="none"><path d="M1 8 L3.500 7 L18.500 20 V24.500 L1 9.500 Z M1 18 L3.500 19 L18.500 6 V1.500 L1 16.500 Z" fill="#7a42bb" /><path d="M0.500 8.500 L3.500 7 V19 L0.500 17.500 Z" fill="#5d2f96" /><path d="M18.500 0.500 L25.500 3.500 V22.500 L18.500 25.500 Z" fill="#a97be8" /></Ic>
      </TaskItem>
      <TaskItem open>
        <Ic w={22} h={25} s="none"><path d="M5 1 H17 L19 3 L21.500 5 L20.500 8 L21 10 C20 16 18.500 20 11 24.800 C3.500 20 2 16 1 10 L1.500 8 L0.500 5 L3 3 Z" fill="#fb4a1c" /><path d="M5 5.500 L8.500 6 L11 5 L13.500 6 L17 5.500 L18.500 9 L16 13 L17 15 L14 16.500 L14.500 18 L11 20.500 L7.500 18 L8 16.500 L5 15 L6 13 L3.500 9 Z" fill="#fff" /><path d="M6 9 L9.500 10 L8.500 11.500 Z M16 9 L12.500 10 L13.500 11.500 Z M9 14.500 L11 15.300 L13 14.500 L11 17.500 Z M10.500 7 H11.500 V12 H10.500 Z" fill="#fb4a1c" /></Ic>
      </TaskItem>
      <TaskItem open>
        <Ic w={24} h={24} s="none"><circle cx="12" cy="12" r="11.800" fill="#fff" stroke="#d5d0d0" strokeWidth="0.600" /><g strokeWidth="2.800" strokeLinecap="round"><path d="M10.200 5 V5.200 M5.200 10 H9.800" stroke="#36c5f0" /><path d="M14 5.200 V9.800 M18.800 10 H18.900" stroke="#2eb67d" /><path d="M14 14 H18.700 M14 18.600 V18.700" stroke="#ecb22e" /><path d="M10.200 14 V18.700 M5.300 14 H5.500" stroke="#e01e5a" /></g></Ic>
      </TaskItem>
      <TaskItem open>
        <div className="flex h-[22px] w-[23px] items-center justify-center rounded-[3px] bg-[#330000] text-[12.500px] font-bold text-[#ff9a00]">Ai</div>
      </TaskItem>
      <div className="ml-[222px] flex items-center">
        <Ic w={14} h={9} s="#222" sw={1.400}><path d="M1 7.800 L7 1.500 L13 7.800" /></Ic>
        <Ic w={17} h={13} s="#444" sw={1.200} className="ml-[9px]"><path d="M4 11.800 C0 11.500 0 7 3.500 6.500 C4 1 10.500 0 12 4.500 C16.500 4.500 17.500 11 13.500 11.800 Z" fill="#b9b9b9" /><path d="M4 11.500 L11 6 C14 5 17 8 15.500 11 Z" fill="#eee" stroke="none" /></Ic>
        <Ic w={17} h={13} s="#111" sw={1.200} className="ml-[8px]"><rect x="5.500" y="3.500" width="9.500" height="7" fill="#111" /><path d="M4 11.500 H15.500 M16.300 5 V9 M0.500 1 V5 H4 V1 M2.200 5 V11 M1.500 0 V2 M3.200 0 V2" /></Ic>
        <Ic w={18} h={14} s="#222" sw={1.200} className="ml-[7px]"><path d="M0.700 4.500 H3 L6.500 1.500 V12.500 L3 9.500 H0.700 Z M8.500 5 C9.500 6 9.500 8 8.500 9" /><path d="M11 3.500 C13 5.500 13 8.500 11 10.500 M13.500 1.500 C17 4.500 17 9.500 13.500 12.500" stroke="#aaa" /></Ic>
        <Ic w={16} h={14} s="none" className="ml-[7px]"><path d="M4 0.500 L8 3 L4 5.500 L0.500 3 Z M12 0.500 L15.500 3 L12 5.500 L8 3 Z M4 5.500 L8 8 L4 10.500 L0.500 8 Z M12 5.500 L15.500 8 L12 10.500 L8 8 Z M8 9 L11.500 11.300 L8 13.500 L4.500 11.300 Z" fill="#111" /></Ic>
        <div className="-mt-[3px] ml-[8px] flex w-[64px] flex-col items-center whitespace-nowrap text-[12.200px] leading-[19px] tracking-[-0.250px] text-[#222]">
          <div>6:09 PM</div>
          <div>3/31/2021</div>
        </div>
        <div className="relative ml-[14px] h-[26px] w-[28px]">
          <Ic w={18} h={18} s="none" className="mt-[3px]"><path d="M0.500 0.500 H17.500 V13 H8 L4 17 V13 H0.500 Z" fill="#111" /><path d="M3 4 H15 M3 6.500 H15 M3 9 H11" stroke="#eee" strokeWidth="1" /></Ic>
          <div className="absolute left-[7px] top-[9px] flex h-[18px] w-[18px] items-center justify-center rounded-full border border-[#777] bg-[#d9cdce] text-[10px] font-semibold text-[#222]">13</div>
        </div>
        <div className="ml-[10px] h-11 w-px bg-[#cdb5b8]" />
      </div>
    </footer>
  );
}

export default function App() {
  return (
    <div className="flex h-[892px] w-[1584px] flex-col overflow-hidden bg-[#f3f2f1] font-['Open_Sans','Noto_Sans',sans-serif]">
      <TitleBar />
      <TabBar />
      <section className="flex h-[98px] shrink-0">
        <Clipboard />
        <Sep />
        <FontGroup />
        <Sep />
        <ParagraphGroup />
        <Sep />
        <StylesGroup />
        <Sep />
        <EditingGroup />
        <Sep />
        <RightGroups />
      </section>
      <div className="relative z-10 -mb-[5px] h-[5px] shrink-0 bg-gradient-to-b from-black/15 to-transparent" />
      <Editor />
      <StatusBar />
      <Taskbar />
    </div>
  );
}
